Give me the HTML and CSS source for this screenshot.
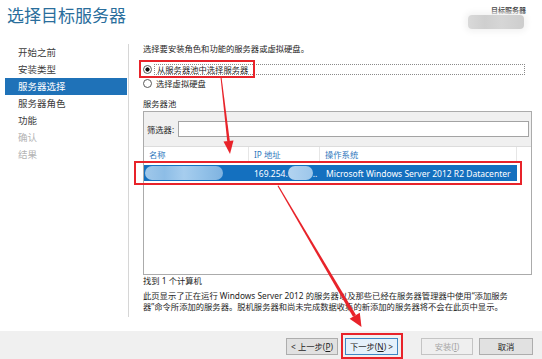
FILE: index.html
```html
<!DOCTYPE html>
<html lang="zh-CN">
<head>
<meta charset="utf-8">
<title>选择目标服务器</title>
<link rel="stylesheet" href="styles.css">
</head>
<body>
<div class="window">
  <header class="top">
    <h1 class="title">选择目标服务器</h1>
    <div class="target">
      <div class="target-label">目标服务器</div>
      <div class="target-blur"></div>
    </div>
  </header>
  <div class="main">
    <nav class="side">
      <div class="step">开始之前</div>
      <div class="step">安装类型</div>
      <div class="step active">服务器选择</div>
      <div class="step">服务器角色</div>
      <div class="step">功能</div>
      <div class="step disabled">确认</div>
      <div class="step disabled">结果</div>
    </nav>
    <section class="content">
      <p class="intro">选择要安装角色和功能的服务器或虚拟硬盘。</p>
      <div class="radio-row first"><span class="radio checked"></span><span class="radio-label focus">从服务器池中选择服务器</span></div>
      <div class="radio-row second"><span class="radio"></span><span class="radio-label">选择虚拟硬盘</span></div>
      <div class="pool-label">服务器池</div>
      <div class="pool">
        <div class="filter"><span class="filter-label">筛选器:</span><div class="filter-input"></div></div>
        <div class="thead">
          <div class="c1">名称</div>
          <div class="c2">IP 地址</div>
          <div class="c3">操作系统</div>
          <div class="c4"></div>
        </div>
        <div class="row selected">
          <div class="c1"><span class="blur name-blur"></span></div>
          <div class="c2">169.254.<span class="blur ip-blur"></span>..</div>
          <div class="c3">Microsoft Windows Server 2012 R2 Datacenter</div>
        </div>
      </div>
      <div class="found">找到 1 个计算机</div>
      <p class="desc">此页显示了正在运行 Windows Server 2012 的服务器以及那些已经在服务器管理器中使用“添加服务<br>器”命令所添加的服务器。脱机服务器和尚未完成数据收集的新添加的服务器将不会在此页中显示。</p>
    </section>
  </div>
  <footer class="footer">
    <button class="btn prev">&lt; 上一步(<u>P</u>)</button>
    <button class="btn next">下一步(<u>N</u>) &gt;</button>
    <button class="btn install" disabled>安装(<u>I</u>)</button>
    <button class="btn cancel">取消</button>
  </footer>
  <svg class="annot" width="542" height="359" viewBox="0 0 542 359">
    <g fill="none" stroke="#e8232a" stroke-width="2">
      <rect x="140" y="61" width="114" height="16"/>
      <rect x="135" y="162" width="386" height="22"/>
      <rect x="342" y="334" width="60" height="24"/>
    </g>
    <g fill="#e8232a">
      <polygon points="220.5,77 221.5,77 229.8,141 227.2,141.3"/>
      <polygon points="230,154 223.5,141.6 233.5,140.4"/>
      <polygon points="277.5,186 278.5,185.5 356,315 353,316.8"/>
      <polygon points="361.5,327 349.6,318.8 359.8,312.8"/>
    </g>
  </svg>
</div>
</body>
</html>
```

FILE: styles.css
```css
html, body {
  margin: 0;
  padding: 0;
}

body {
  width: 542px;
  height: 359px;
  overflow: hidden;
  background: #ffffff;
  font-family: "Noto Sans", "Noto Sans CJK SC", sans-serif;
  color: #1e1e1e;
}

.window {
  position: relative;
  display: flex;
  flex-direction: column;
  height: 359px;
}

.top {
  height: 44px;
  display: flex;
  justify-content: space-between;
  align-items: flex-start;
}

.title {
  margin: 6px 0 0 7px;
  font-family: "Noto Sans CJK SC", sans-serif;
  font-size: 17px;
  line-height: 18px;
  font-weight: normal;
  color: #2a6e9c;
}

.target {
  margin: 6px 16px 0 0;
  display: flex;
  flex-direction: column;
  align-items: flex-end;
}

.target-label {
  font-family: "Noto Sans CJK SC", sans-serif;
  font-size: 7px;
  line-height: 8px;
  font-weight: bold;
  color: #333333;
}

.target-blur {
  margin: 1px 2px 0 0;
  width: 56px;
  height: 14px;
  border-radius: 4px;
  background: linear-gradient(90deg, #d9d9d9, #cfcfcf 30%, #d6d6d6 60%, #cdcdcd);
  box-shadow: 0 0 6px 3px #f3f3f3;
}

.main {
  display: flex;
  height: 273px;
}

.side {
  width: 123px;
  padding-left: 5px;
  border-right: 1px solid #d6d6d6;
  font-family: "Noto Sans CJK SC", sans-serif;
  font-size: 9.5px;
  color: #3c3c3c;
}

.step {
  width: 122px;
  height: 17px;
  line-height: 17px;
  padding-left: 13px;
  box-sizing: border-box;
}

.step.active {
  background: #1f72b8;
  color: #ffffff;
}

.step.disabled {
  color: #b4b4b4;
}

.content {
  flex: 1;
  padding: 0 10px 0 14px;
  font-size: 8.3px;
  color: #1e1e1e;
}

.intro {
  margin: 0;
  height: 10px;
  line-height: 10px;
}

.radio-row {
  display: flex;
  align-items: center;
  height: 11px;
}

.radio-row.first {
  margin-top: 10px;
}

.radio-row.second {
  margin-top: 3px;
}

.radio {
  width: 9px;
  height: 9px;
  border: 1px solid #5a5a5a;
  border-radius: 50%;
  box-sizing: border-box;
  background: #ffffff;
  flex: none;
}

.radio.checked {
  background: radial-gradient(circle, #111111 0, #111111 1.8px, #ffffff 2.4px);
}

.radio-label {
  margin-left: 2px;
  padding-left: 2px;
  line-height: 11px;
}

.radio-label.focus {
  flex: 1;
  margin-right: 7px;
  height: 11px;
  line-height: 9px;
  border: 1px dotted #8a8a8a;
  box-sizing: border-box;
}

.pool-label {
  margin-top: 9px;
  height: 11px;
  line-height: 11px;
}

.pool {
  margin-top: 2px;
  height: 164px;
  border: 1px solid #ababab;
  box-sizing: border-box;
  background: #ffffff;
}

.filter {
  height: 34px;
  background: #f0f0f0;
  border-bottom: 1px solid #dcdcdc;
  display: flex;
  align-items: center;
  padding: 0 2px 0 3px;
}

.filter-label {
  width: 31px;
  flex: none;
}

.filter-input {
  flex: 1;
  height: 16px;
  border: 1px solid #a3a3a3;
  background: #ffffff;
  box-sizing: border-box;
}

.thead {
  display: flex;
  height: 16px;
  line-height: 16px;
  color: #2f78bd;
}

.thead > div {
  border-right: 1px solid #e6e6e6;
  padding-left: 5px;
  box-sizing: border-box;
}

.c1 {
  width: 105px;
  flex: none;
}

.c2 {
  width: 71px;
  flex: none;
}

.c3 {
  width: 197px;
  flex: none;
}

.thead > .c4 {
  flex: 1;
  border-right: none;
}

.row {
  margin-top: 2px;
  display: flex;
  align-items: center;
  width: 373px;
  height: 16px;
  font-size: 8.5px;
}

.row.selected {
  background: #1470bf;
  color: #ffffff;
}

.row .c1 {
  padding-left: 1px;
  display: flex;
  align-items: center;
}

.row .c2 {
  padding-left: 4px;
  display: flex;
  align-items: center;
  white-space: nowrap;
}

.row .c3 {
  padding-left: 1px;
  white-space: nowrap;
}

.blur {
  display: inline-block;
  height: 14px;
  border-radius: 7px;
}

.name-blur {
  width: 78px;
  background: linear-gradient(90deg, #a0c8ea, #8dbde6 25%, #a6cdee 50%, #92c1e8 75%, #7fb3e0);
}

.ip-blur {
  width: 25px;
  background: linear-gradient(90deg, #b3d4f0, #9cc6ea);
}

.found {
  margin-top: 1px;
  height: 10px;
  line-height: 10px;
}

.desc {
  margin: 4px 0 0 0;
  line-height: 11px;
}

.footer {
  margin-top: auto;
  height: 28px;
  box-sizing: border-box;
  background: #f0f0f0;
  display: flex;
  justify-content: flex-end;
  align-items: flex-start;
  padding: 7px 9px 0 0;
}

.btn {
  margin: 0;
  padding: 0;
  width: 52px;
  height: 17px;
  box-sizing: border-box;
  border: 1px solid #adadad;
  background: #e1e1e1;
  font-family: "Noto Sans", "Noto Sans CJK SC", sans-serif;
  font-size: 8.3px;
  line-height: 15px;
  color: #1e1e1e;
  text-align: center;
}

.btn.prev {
  margin-right: 7px;
}

.btn.next {
  width: 53px;
  margin-right: 23px;
  border-color: #3f86c3;
  background: #e5f1fb;
}

.btn.install {
  margin-right: 6px;
  border-color: #c4c4c4;
  background: #efefef;
  color: #a6a6a6;
}

.btn.cancel {
  width: 54px;
}

.annot {
  position: absolute;
  left: 0;
  top: 0;
  pointer-events: none;
}
```
